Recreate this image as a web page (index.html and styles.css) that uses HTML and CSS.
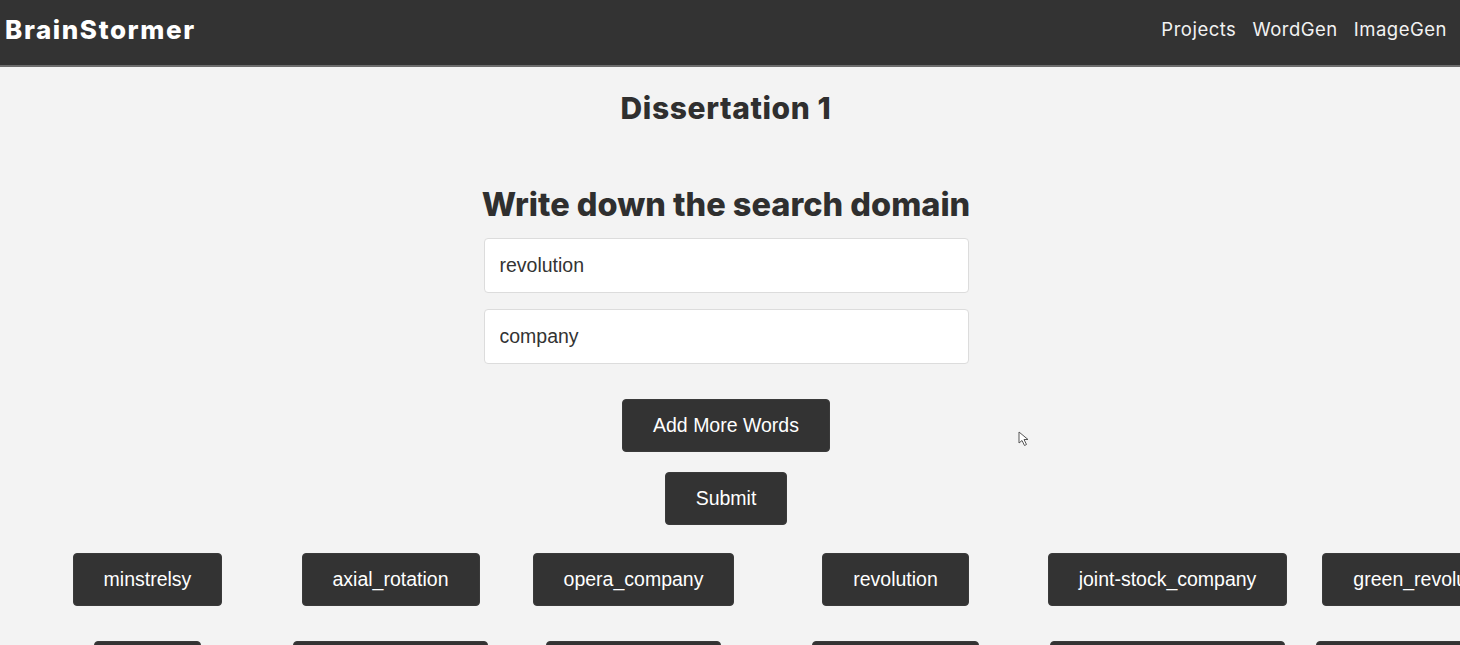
FILE: index.html
```html
<!DOCTYPE html>
<html lang="en">
<head>
<meta charset="utf-8">
<title>BrainStormer</title>
<link rel="stylesheet" href="styles.css">
</head>
<body>
<nav class="navbar">
  <div class="brand">BrainStormer</div>
  <div class="nav-links">
    <a href="#">Projects</a>
    <a href="#">WordGen</a>
    <a href="#">ImageGen</a>
  </div>
</nav>
<main class="page">
  <h1 class="project-title">Dissertation 1</h1>
  <h2 class="section-title">Write down the search domain</h2>
  <form class="domain-form">
    <input class="word-input" type="text" value="revolution">
    <input class="word-input" type="text" value="company">
    <button type="button" class="btn btn-add">Add More Words</button>
    <button type="button" class="btn btn-submit">Submit</button>
  </form>
  <div class="words-wrap">
    <div class="words-grid">
      <button class="btn word">minstrelsy</button>
      <button class="btn word">axial_rotation</button>
      <button class="btn word">opera_company</button>
      <button class="btn word">revolution</button>
      <button class="btn word">joint-stock_company</button>
      <button class="btn word">green_revolution</button>
      <button class="btn word">troop</button>
      <button class="btn word">circular_motion</button>
      <button class="btn word">opera_house</button>
      <button class="btn word">spin_motion</button>
      <button class="btn word">industrial_revolution</button>
      <button class="btn word">cultural_revolution</button>
    </div>
  </div>
</main>
<div class="cursor" aria-hidden="true">
  <svg width="12" height="16" viewBox="0 0 12 16"><path d="M1 1 L1 12 L4 9.5 L6.5 14.5 L8.5 13.5 L6 8.5 L10 8.5 Z" fill="#fff" stroke="#555" stroke-width="1"/></svg>
</div>
</body>
</html>
```

FILE: styles.css
```css
html, body {
  margin: 0;
  padding: 0;
  overflow: hidden;
}
body {
  background: #f3f3f3;
  font-family: "Liberation Sans", Arial, sans-serif;
  color: #333;
  position: relative;
  height: 645px;
}
.navbar {
  height: 58px;
  padding: 0 13px 7px 5px;
  background: #333;
  border-bottom: 2px solid #6c6c6c;
  display: flex;
  align-items: center;
  justify-content: space-between;
}
.brand {
  font-family: Inter, "Open Sans", sans-serif;
  font-weight: 800;
  font-size: 26px;
  color: #fff;
  letter-spacing: 1.6px;
}
.nav-links {
  display: flex;
  gap: 16px;
}
.nav-links a {
  font-family: Inter, "Open Sans", sans-serif;
  font-size: 18.5px;
  font-weight: 400;
  letter-spacing: 0.5px;
  color: #f2f2f2;
  text-decoration: none;
}
.page {
  display: flex;
  flex-direction: column;
  align-items: center;
  padding-right: 8px;
}
.project-title {
  font-family: Inter, "Open Sans", sans-serif;
  font-weight: 800;
  font-size: 30px;
  line-height: 40px;
  letter-spacing: 0.6px;
  margin: 21px 0 0;
  color: #2f2f2f;
}
.section-title {
  font-family: Inter, "Open Sans", sans-serif;
  font-weight: 800;
  font-size: 32.5px;
  line-height: 44px;
  margin: 55px 0 0;
  color: #2f2f2f;
}
.domain-form {
  display: flex;
  flex-direction: column;
  align-items: center;
  margin-top: 11px;
}
.word-input {
  box-sizing: border-box;
  width: 485px;
  height: 55px;
  border: 1px solid #dcdcdc;
  border-radius: 4px;
  background: #fff;
  padding: 0 15px;
  font-family: "Liberation Sans", Arial, sans-serif;
  font-size: 19.5px;
  color: #333;
  margin-bottom: 16px;
}
.word-input:last-of-type {
  margin-bottom: 0;
}
.btn {
  box-sizing: border-box;
  height: 53px;
  padding: 0 30px;
  background: #333;
  color: #fff;
  border: 1px solid #3a3a3a;
  border-radius: 4px;
  font-family: "Liberation Sans", Arial, sans-serif;
  font-size: 19.5px;
  white-space: nowrap;
}
.btn-add {
  margin-top: 35px;
}
.btn-submit {
  margin-top: 20px;
}
.words-wrap {
  align-self: stretch;
  margin-top: 28px;
}
.words-grid {
  display: grid;
  grid-template-columns: 237px 249px 237px 287px 257px 260px;
  row-gap: 35px;
  justify-items: center;
  margin-left: 29px;
}
.cursor {
  position: absolute;
  left: 1018px;
  top: 431px;
  width: 12px;
  height: 16px;
}
```
